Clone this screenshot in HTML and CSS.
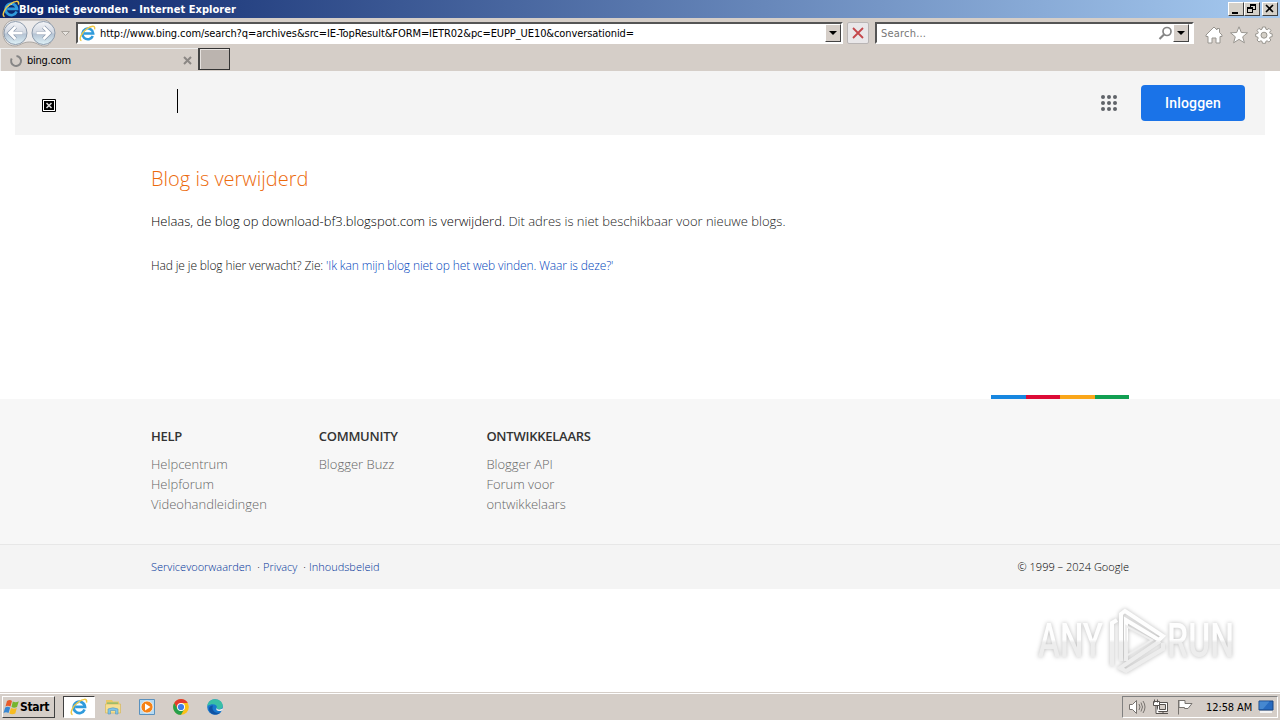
FILE: index.html
```
<!DOCTYPE html>
<html lang="nl">

<head>
    <meta charset="UTF-8">
    <meta name="viewport" content="width=device-width, initial-scale=1.0">
    <title>Blog niet gevonden</title>
    <link rel="stylesheet" href="styles.css">
</head>

<body>
    <!-- shared icons -->
    <svg class="sprite" width="0" height="0">
        <symbol id="ie" viewBox="0 0 18 18">
            <path d="M14.6 11.6A5.7 5.7 0 1 1 15 8.9H5.2" fill="none" stroke="#2f9bdc" stroke-width="2.7" />
            <path d="M5.500 7.200A4 4 0 0 1 10 4.500" fill="none" stroke="#8ed8f8" stroke-width="1" />
            <path d="M2.600 16.600C-1 15.500 3 7.600 8.400 4 12.600 1 17.600-.2 16.500 4.600" fill="none" stroke="#f0c845" stroke-width="1.500" />
        </symbol>
    </svg>

    <div class="titlebar">
        <svg class="title-icon" width="18" height="18"><use href="#ie" /></svg>
        <h1>Blog niet gevonden - Internet Explorer</h1>
        <div class="window-buttons">
            <span class="win-btn"><svg width="14" height="12"><path d="M3 9h6v2H3z" /></svg></span>
            <span class="win-btn"><svg width="14" height="12"><path d="M5 1.5h6M5 2.5h6M5.5 1v3M10.5 1v6M8 6.5h3M2 4.5h6M2 5.5h6M2.5 4v6M7.5 4v6M2 9.5h6" fill="none" stroke="#000" /></svg></span>
            <span class="win-btn close"><svg width="14" height="12"><path d="M3 2l7 7M10 2L3 9" fill="none" stroke="#000" stroke-width="1.6" /></svg></span>
        </div>
    </div>

    <div class="toolbar">
        <svg class="nav" width="74" height="30" viewBox="0 0 74 30">
            <defs>
                <linearGradient id="ball" x1="0" y1="0" x2="0" y2="1">
                    <stop offset="0" stop-color="#f4f5f8" />
                    <stop offset=".48" stop-color="#d2d8e2" />
                    <stop offset=".55" stop-color="#b5c4d4" />
                    <stop offset="1" stop-color="#dff2f8" />
                </linearGradient>
            </defs>
            <path d="M15 2h29c12 0 12 27 0 26-5 0-7-4-14.500-4S20 28 15 28C-1 28-1 2 15 2z" fill="#eceaea" stroke="#aaa6a2" />
            <circle cx="15.500" cy="15" r="11.500" fill="url(#ball)" stroke="#8e9cad" />
            <circle cx="43.500" cy="15" r="11.500" fill="url(#ball)" stroke="#8e9cad" />
            <path d="M22.500 15H10M15.500 9l-6 6 6 6M36.500 15H49M43.500 9l6 6-6 6" fill="none" stroke="#8795aa" stroke-width="4" />
            <path d="M22.500 15H10M15.500 9l-6 6 6 6M36.500 15H49M43.500 9l6 6-6 6" fill="none" stroke="#fff" stroke-width="2.800" />
            <path d="M61.500 13.500h8l-4 4z" fill="#e8e5e1" stroke="#aaa59f" />
        </svg>
        <div class="field address">
            <svg width="17" height="17"><use href="#ie" /></svg>
            <span class="url">http://www.bing.com/search?q=archives&amp;src=IE-TopResult&amp;FORM=IETR02&amp;pc=EUPP_UE10&amp;conversationid=</span>
            <span class="drop"></span>
        </div>
        <span class="stop"><svg width="12" height="12"><path d="M1 1l10 10M11 1L1 11" fill="none" stroke="#c4474b" stroke-width="1.800" /></svg></span>
        <div class="field search">
            <span class="placeholder">Search...</span>
            <svg width="15" height="15"><circle cx="9" cy="5.500" r="4" fill="none" stroke="#858585" stroke-width="1.700" /><path d="M6 8.500L1.500 13" stroke="#858585" stroke-width="2.200" /></svg>
            <span class="drop"></span>
        </div>
        <div class="tools">
            <svg width="18" height="18" viewBox="0 0 18 18"><path d="M1 9l8-8 3 3V2.500h2.500v4L17 9v1.500h-2V17h-4v-5H7v5H3v-6.500H1z" fill="#fff" stroke="#98958f" /></svg>
            <svg width="18" height="18" viewBox="0 0 18 18"><path d="M9 .8l2.300 5.700 6.200.3-4.800 4 1.700 6L9 13.400l-5.400 3.400 1.700-6-4.800-4 6.200-.3z" fill="#fff" stroke="#98958f" /></svg>
            <svg width="18" height="18" viewBox="0 0 18 18"><path d="M7.500 1h3l.4 2.200 1.200.5L14 2.400l2 2-1.300 1.900.5 1.200 2 .4v2.700l-2.100.5-.5 1.200L15.900 14l-2 2-1.800-1.200-1.200.5-.4 2h-3L7 15.300l-1.200-.5L4 16l-2-2 1.200-1.800-.5-1.200-2-.5V7.900l2.100-.4.5-1.200L2 4.400l2-2 1.900 1.300L7 3.200z" fill="#fff" stroke="#98958f" /><circle cx="9" cy="9.200" r="3" fill="#d4d0c8" stroke="#98958f" /></svg>
        </div>
    </div>

    <div class="tabs">
        <div class="tab">
            <svg width="14" height="14"><path d="M7.500 2a5 5 0 1 1-4.800 2.500" fill="none" stroke="#858585" stroke-width="2" /></svg>
            <span>bing.com</span>
            <svg class="tab-close" width="9" height="9"><path d="M1 1l7 7M8 1L1 8" stroke="#8b8784" stroke-width="2" /></svg>
        </div>
        <span class="new-tab"></span>
    </div>

    <main class="page">
        <header class="blog-header">
            <svg class="broken" width="14" height="13"><path d="M.5.500h13v12H.5z" fill="#fff" stroke="#000" /><path d="M2 2h10v9H2z" /><path d="M4.500 4l5 5M9.500 4l-5 5" stroke="#ddd" stroke-width="1.500" /></svg>
            <span class="caret"></span>
            <svg class="apps" width="18" height="18" viewBox="0 0 18 18" fill="#5f6368">
                <circle cx="3" cy="3" r="2" /><circle cx="9" cy="3" r="2" /><circle cx="15" cy="3" r="2" />
                <circle cx="3" cy="9" r="2" /><circle cx="9" cy="9" r="2" /><circle cx="15" cy="9" r="2" />
                <circle cx="3" cy="15" r="2" /><circle cx="9" cy="15" r="2" /><circle cx="15" cy="15" r="2" />
            </svg>
            <a class="login">Inloggen</a>
        </header>

        <section class="message">
            <h2><span>Blog is verwijderd</span></h2>
            <p class="removed"><b>Helaas, de blog op download-bf3.blogspot.com is verwijderd.</b> <span>Dit adres is niet beschikbaar voor nieuwe blogs.</span></p>
            <p class="expected">Had je je blog hier verwacht? Zie: <a>'Ik kan mijn blog niet op het web vinden. Waar is deze?'</a></p>
        </section>

        <div class="stripe"><i class="blue"></i><i class="red"></i><i class="yellow"></i><i class="green"></i></div>

        <footer>
            <div class="footer-links">
                <div class="column">
                    <h3>HELP</h3>
                    <ul>
                        <li>Helpcentrum</li>
                        <li>Helpforum</li>
                        <li>Videohandleidingen</li>
                    </ul>
                </div>
                <div class="column">
                    <h3>COMMUNITY</h3>
                    <ul>
                        <li>Blogger Buzz</li>
                    </ul>
                </div>
                <div class="column">
                    <h3>ONTWIKKELAARS</h3>
                    <ul>
                        <li>Blogger API</li>
                        <li>Forum voor ontwikkelaars</li>
                    </ul>
                </div>
            </div>
            <div class="legal">
                <div class="legal-links"><a>Servicevoorwaarden</a><span>·</span><a>Privacy</a><span>·</span><a>Inhoudsbeleid</a></div>
                <p>© 1999 – 2024 Google</p>
            </div>
        </footer>

        <svg class="watermark" width="220" height="76" viewBox="0 0 220 76">
            <defs>
                <linearGradient id="shine" gradientUnits="userSpaceOnUse" x1="0" y1="0" x2="0" y2="76">
                    <stop offset=".48" stop-color="#fefefe" />
                    <stop offset=".52" stop-color="#ededed" />
                </linearGradient>
            </defs>
            <g class="mark-text" fill="url(#shine)">
                <text x="8" y="54" textLength="65" lengthAdjust="spacingAndGlyphs">ANY</text>
                <text x="137" y="54" textLength="67" lengthAdjust="spacingAndGlyphs">RUN</text>
            </g>
            <g class="mark-logo" stroke="url(#shine)">
                <path d="M82 63V20l5-3M91 58V11l4-3 38 25-4 4-33-20v41M133 40v6L96 68l-6-3 40-27" />
                <path d="M96 23v30l26-16z" class="mark-inner" />
            </g>
        </svg>
    </main>

    <div class="taskbar">
        <div class="start">
            <svg width="18" height="16" viewBox="0 0 18 16"><path d="M4 2q3-2 5 0L7.500 7.500q-3-1.500-5 0z" fill="#e85b2a" /><path d="M9.800 2.500q3 1.500 6-.3L14 8q-3 1.500-5.500 0z" fill="#76b52e" /><path d="M2.200 8.500q2.500-1.500 5 0L5.500 14q-2.500-1.500-5 0z" fill="#3787d3" /><path d="M8 9q3 1.500 5.800 0l-1.500 5.500q-3 1.500-6 0z" fill="#f7bc22" /></svg>
            <span>Start</span>
        </div>
        <div class="apps-bar">
            <span class="app active"><svg width="18" height="18"><use href="#ie" /></svg></span>
            <span class="app"><svg width="18" height="18" viewBox="0 0 18 18"><path d="M2 2h6l1 1.500h6V9H2z" fill="#e9c865" /><path d="M3 4.500h11v5H3z" fill="#80bd72" /><path d="M1.500 6h15v9h-15z" fill="#f6df91" stroke="#d6b75d" stroke-width=".7" /><path d="M4 16v-5q5-2.500 10 0v5h-2.500v-3.500h-5V16z" fill="#80c4e6" stroke="#5798be" stroke-width=".6" /></svg></span>
            <span class="app"><svg width="18" height="18" viewBox="0 0 18 18"><path d="M1.500 1.500h15v15h-15z" fill="#b6daf2" stroke="#5a91be" /><circle cx="9" cy="9" r="6" fill="#f58216" stroke="#fff" stroke-width=".7" /><path d="M7 5.500v7L12.500 9z" fill="#fff" /></svg></span>
            <span class="app"><svg width="18" height="18" viewBox="0 0 18 18"><circle cx="9" cy="9" r="7.800" fill="#fbc116" /><path d="M2.200 5.100A7.800 7.800 0 0 1 15.800 5.100H9L5.600 11z" fill="#e33b2e" /><path d="M2.200 5.100A7.800 7.800 0 0 0 9 16.800L12.400 11H5.600z" fill="#269f4b" /><circle cx="9" cy="9" r="4" fill="#fff" /><circle cx="9" cy="9" r="3.100" fill="#3e7de8" /></svg></span>
            <span class="app"><svg width="18" height="18" viewBox="0 0 18 18"><circle cx="9" cy="9" r="7.800" fill="#1878ce" /><path d="M1.300 8C2 3.500 5 1.200 9 1.200c4.800 0 7.800 3.300 7.800 6.500 0 2.300-1.700 3.600-4 3.600-2 0-2.500-.7-2-1.700C11.500 7 7 4.500 1.300 8z" fill="#39bfa6" /><path d="M7 7.500C5 12 9 16 14.500 14.500 11 18 3.500 17 3 11c0-2 1.500-3.500 4-3.500z" fill="#1053a4" /><path d="M10.800 9.500c-.5 1 .4 2.300 3 1.900l3-1v1.500c-3 2.300-8 1.200-6-2.400z" fill="#eee" /></svg></span>
        </div>
        <div class="tray">
            <svg width="18" height="16" viewBox="0 0 18 16" fill="#fff" stroke="#77736f"><path d="M1.500 5.500h3l4-4v13l-4-4h-3z" /><path d="M11 5q2 3 0 6M13 3.500q3 4.500 0 9M15 2q4 6 0 12" fill="none" /></svg>
            <svg width="18" height="16" viewBox="0 0 18 16" fill="#fff" stroke="#55514e"><path d="M5.500 3.500h10v9h-10zM7 14.500h9M11 12.500v2" /><path d="M7.500 5.500h6v5h-6z" fill="#d5cec8" /><path d="M2.500.500v3M5.500.500v3M1.500 2.500h6v4h-6zM4 6.500v8h3" /></svg>
            <svg width="18" height="16" viewBox="0 0 18 16" fill="#fff" stroke="#77736f"><path d="M2.500 1v14.500M3 1.500h6v3h7L12 9.500H8.500v-1H3z" /></svg>
            <time>12:58 AM</time>
            <svg class="desktop" width="16" height="14" viewBox="0 0 16 14"><path d="M1 1h14v9H1z" fill="#286bc0" stroke="#184783" /><path d="M1.500 1.500h10L5 9H1.500z" fill="#4688d0" /><path d="M2 12h12" stroke="#f4f4f4" stroke-width="2" /></svg>
        </div>
    </div>
</body>

</html>
```
FILE: styles.css
```
* {
    box-sizing: border-box;
    margin: 0;
    padding: 0;
}

body {
    width: 1280px;
    height: 720px;
    overflow: hidden;
    display: flex;
    flex-direction: column;
    background-color: white;
    color: black;
    font-family: "DejaVu Sans Condensed", "DejaVu Sans", sans-serif;
    font-stretch: condensed;
    font-size: 11px;
}

svg {
    display: block;
    flex-shrink: 0;
}

.sprite {
    display: none;
}

/* browser window */
.titlebar {
    height: 18px;
    flex-shrink: 0;
    display: flex;
    align-items: center;
    padding-right: 2px;
    background: linear-gradient(to right, #0a246a, #a6caf0);
}

.title-icon {
    margin-left: 2px;
}

.titlebar h1 {
    margin-left: -1px;
    flex: 1;
    color: white;
    font-size: 11px;
    font-weight: bold;
    letter-spacing: 0.04px;
    white-space: nowrap;
}

.window-buttons {
    display: flex;
}

.win-btn {
    width: 16px;
    height: 14px;
    background-color: #d4d0c8;
    border: 1px solid;
    border-color: white #404040 #404040 white;
}

.win-btn.close {
    margin-left: 2px;
}

.toolbar {
    height: 30px;
    flex-shrink: 0;
    display: flex;
    align-items: center;
    background-color: #d5cec8;
}

.nav {
    margin-right: 2px;
}

.field {
    height: 22px;
    display: flex;
    align-items: center;
    background-color: white;
    border: 2px solid;
    border-color: #555 #fff #fff #555;
}

.address {
    width: 767px;
    padding-left: 1px;
}

.url {
    flex: 1;
    margin-left: 4px;
    padding-top: 1px;
    letter-spacing: -0.085px;
    white-space: nowrap;
}

.drop {
    width: 16px;
    height: 18px;
    display: grid;
    place-items: center;
    background-color: #d5cec8;
    border: 1px solid;
    border-color: #fff #444 #444 #fff;
}

.drop::after {
    content: "";
    border: 4px solid transparent;
    border-top-color: black;
    border-bottom: 0;
}

.stop {
    width: 22px;
    height: 22px;
    margin: 0 6px 0 4px;
    display: grid;
    place-items: center;
    background-color: #e9e7e9;
    border: 1px solid #b9b5b5;
    border-radius: 2px;
}

.search {
    width: 319px;
    padding: 0 3px 0 4px;
}

.placeholder {
    flex: 1;
    padding-top: 1px;
    color: #777;
    letter-spacing: 0.2px;
}

.tools {
    margin-left: 11px;
    padding-top: 3px;
    display: flex;
    gap: 7px;
}

.tabs {
    height: 23px;
    flex-shrink: 0;
    display: flex;
    background-color: #d5cec8;
}

.tab {
    width: 198px;
    padding: 1px 6px 0 8px;
    display: flex;
    align-items: center;
    border-top: 1px solid #eee;
    border-left: 1px solid #eee;
}

.tab span {
    flex: 1;
    margin-left: 4px;
    letter-spacing: -0.25px;
}

.new-tab {
    width: 32px;
    height: 22px;
    background-color: #bbb4af;
    border: 1px solid #333;
    border-left: 2px solid #444;
    box-shadow: inset 1px 1px #e6e2df;
}

/* blog page */
.page {
    height: 621px;
    flex-shrink: 0;
    position: relative;
    font-family: "Open Sans", sans-serif;
    font-stretch: normal;
    font-weight: 300;
}

.blog-header {
    height: 64px;
    margin: 0 15px;
    padding: 0 20px 0 27px;
    display: flex;
    align-items: center;
    background-color: #f4f4f4;
}

.broken {
    margin-top: 5px;
}

.caret {
    width: 1px;
    height: 24px;
    margin: -4px auto 0 121px;
    background-color: black;
}

.login {
    width: 104px;
    height: 36px;
    margin-left: 23px;
    background-color: #1a73e8;
    color: white;
    border-radius: 4px;
    font: 500 14px/36px Roboto, sans-serif;
    letter-spacing: 0.2px;
    text-align: center;
}

.message {
    height: 260px;
    padding: 29px 151px 0;
}

.message h2 {
    color: #ec6a0c;
    font-size: 20px;
    font-weight: 300;
    line-height: 30px;
}

.removed {
    margin-top: 17px;
    color: #222;
    font-size: 13px;
    line-height: 20px;
}

.removed b {
    color: black;
    font-weight: 300;
}

.expected {
    margin-top: 26px;
    color: #111;
    font-size: 12px;
    line-height: 18px;
    letter-spacing: -0.125px;
}

a {
    color: #0044bb;
}

.stripe {
    width: 138px;
    height: 4px;
    margin-left: 991px;
    display: flex;
}

.stripe i {
    flex: 1;
}

.blue {
    background-color: #1787e0;
}

.red {
    background-color: #dc0b36;
}

.yellow {
    background-color: #faa61a;
}

.green {
    background-color: #119f52;
}

.footer-links {
    height: 145px;
    padding: 27px 151px 0;
    display: flex;
    background-color: #f7f7f7;
}

.column {
    width: 167.7px;
    padding-right: 45px;
}

.column h3 {
    margin-bottom: 8px;
    color: #333;
    font-size: 13px;
    font-weight: 600;
    line-height: 20px;
    letter-spacing: -0.25px;
}

.column li {
    list-style: none;
    color: #666;
    font-size: 13px;
    line-height: 20px;
}

.legal {
    height: 45px;
    padding: 0 151px 2px;
    display: flex;
    justify-content: space-between;
    align-items: center;
    background-color: #f4f4f4;
    border-top: 1px solid #e7e7e7;
    color: black;
    font-size: 11px;
}

.legal-links span {
    margin: 0 3px 0 6px;
}

.legal-links a {
    color: #003399;
}

.watermark {
    position: absolute;
    left: 1030px;
    top: 532px;
    filter: drop-shadow(0 0 2px #bbb);
}

.mark-text {
    font-family: Roboto, sans-serif;
    font-size: 48px;
    font-weight: 500;
}

.mark-logo {
    fill: none;
    stroke-width: 4;
}

.mark-logo .mark-inner {
    stroke: #eee;
    stroke-width: 2;
}

/* taskbar */
.taskbar {
    height: 28px;
    flex-shrink: 0;
    padding: 1px 2px 0;
    display: flex;
    align-items: center;
    background-color: #d5cec8;
    border-top: 1px solid #d5cec8;
    box-shadow: inset 0 1px white;
}

.start {
    width: 53px;
    height: 22px;
    display: flex;
    align-items: center;
    border: 1px solid;
    border-color: white #404040 #404040 white;
    font-size: 12px;
    font-weight: bold;
    letter-spacing: -0.35px;
}

.start span {
    margin-left: -1px;
}

.apps-bar {
    margin-left: 8px;
    display: flex;
    gap: 2px;
    flex: 1;
}

.app {
    width: 32px;
    height: 22px;
    display: grid;
    place-items: center;
}

.app.active {
    background-color: white;
    border: 1px solid;
    border-color: #404040 white white #404040;
}

.tray {
    width: 156px;
    height: 22px;
    padding-left: 5px;
    display: flex;
    align-items: center;
    gap: 6px;
    border: 1px solid;
    border-color: #808080 white white #808080;
}

.tray time {
    margin-left: 6px;
    letter-spacing: -0.1px;
    white-space: nowrap;
}
```
